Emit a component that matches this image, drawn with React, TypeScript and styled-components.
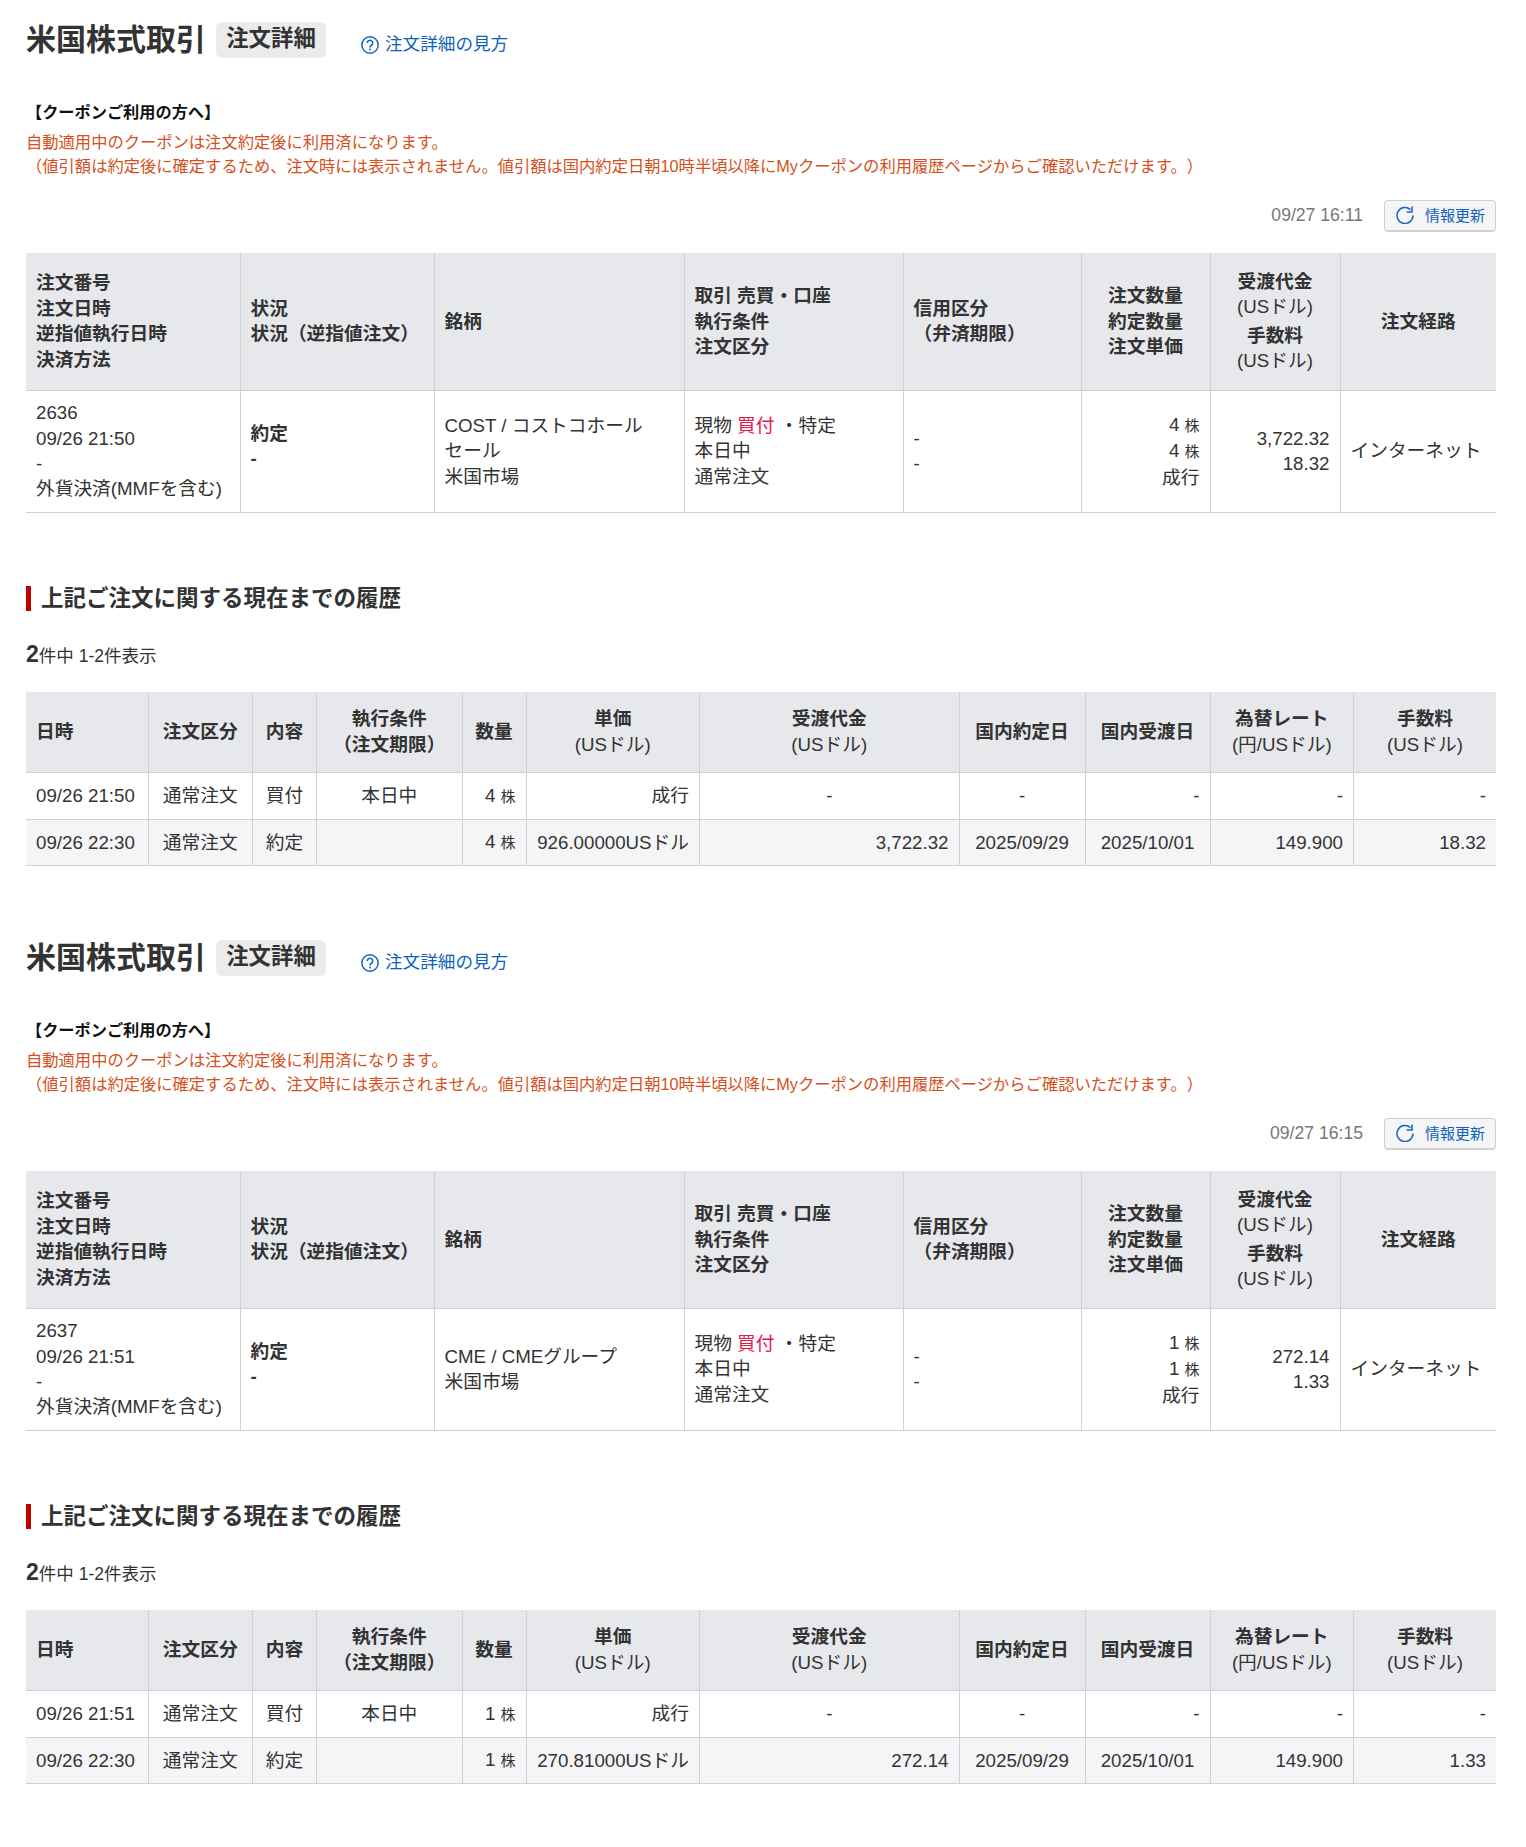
import * as React from 'react';
import styled, { createGlobalStyle } from 'styled-components';

const GlobalStyle = createGlobalStyle`
  html, body {
    margin: 0;
    padding: 0;
    background: #fff;
    color: #333;
    font-family: "Liberation Sans", "Noto Sans CJK JP", sans-serif;
    font-size: 18.72px;
    line-height: 25.4px;
  }
`;

type Align = 'left' | 'center' | 'right';

interface Order {
  number: string;
  ordered: string;
  name: string[];
  qty: string;
  amount: string;
  fee: string;
  now: string;
  fillTime: string;
  price: string;
  amountHistory: string;
  feeHistory: string;
}

const orders: Order[] = [
  {
    number: '2636',
    ordered: '09/26 21:50',
    name: ['COST / コストコホール', 'セール', '米国市場'],
    qty: '4',
    amount: '3,722.32',
    fee: '18.32',
    now: '09/27 16:11',
    fillTime: '09/26 22:30',
    price: '926.00000USドル',
    amountHistory: '3,722.32',
    feeHistory: '18.32',
  },
  {
    number: '2637',
    ordered: '09/26 21:51',
    name: ['CME / CMEグループ', '米国市場'],
    qty: '1',
    amount: '272.14',
    fee: '1.33',
    now: '09/27 16:15',
    fillTime: '09/26 22:30',
    price: '270.81000USドル',
    amountHistory: '272.14',
    feeHistory: '1.33',
  },
];

const detailCols = [214, 194, 250, 219, 178, 129, 130, 156];
const historyCols = [122, 104.5, 64, 145.5, 64, 173.5, 259.5, 126, 125, 143.5, 142.5];

const HelpIcon = () => (
  <svg width="18" height="18" viewBox="0 0 18 18" fill="none" stroke="#1565c0">
    <circle cx="9" cy="9" r="8.2" strokeWidth="1.5" />
    <path d="M6.3 7a2.7 2.7 0 1 1 4.1 2.3c-1 .6-1.4 1.1-1.4 2.2" strokeWidth="1.6" />
    <circle cx="9" cy="13.6" r="1" fill="#1565c0" stroke="none" />
  </svg>
);

const RefreshIcon = () => (
  <svg width="18" height="18" viewBox="0 0 18 18" fill="none" stroke="#1565c0">
    <path d="M17 9.6A8 8 0 1 1 14.4 3.6" strokeWidth="1.5" />
    <path d="M16 .6v5.4h-5.4" strokeWidth="1.6" />
  </svg>
);

const OrderSection: React.FC<{ order: Order }> = ({ order }) => (
  <Section>
    <TitleRow>
      <Title>米国株式取引</Title>
      <Badge>注文詳細</Badge>
      <HelpLink>
        <HelpIcon />
        注文詳細の見方
      </HelpLink>
    </TitleRow>

    <CouponHead>【クーポンご利用の方へ】</CouponHead>
    <Notice>
      自動適用中のクーポンは注文約定後に利用済になります。
      <br />
      （値引額は約定後に確定するため、注文時には表示されません。値引額は国内約定日朝10時半頃以降にMyクーポンの利用履歴ページからご確認いただけます。）
    </Notice>

    <UpdateRow>
      <Stamp>{order.now}</Stamp>
      <RefreshButton>
        <RefreshIcon />
        情報更新
      </RefreshButton>
    </UpdateRow>

    <Table>
      <colgroup>
        {detailCols.map((w, i) => (
          <Col key={i} $w={w} />
        ))}
      </colgroup>
      <thead>
        <tr>
          <Th $h={137}>
            注文番号
            <br />
            注文日時
            <br />
            逆指値執行日時
            <br />
            決済方法
          </Th>
          <Th>
            状況
            <br />
            状況（逆指値注文）
          </Th>
          <Th>銘柄</Th>
          <Th>
            取引 売買・口座
            <br />
            執行条件
            <br />
            注文区分
          </Th>
          <Th>
            信用区分
            <br />
            （弁済期限）
          </Th>
          <Th $align="center">
            注文数量
            <br />
            約定数量
            <br />
            注文単価
          </Th>
          <Th $align="center">
            受渡代金
            <Unit>(USドル)</Unit>
            <FeeHead>手数料</FeeHead>
            <Unit>(USドル)</Unit>
          </Th>
          <Th $align="center">注文経路</Th>
        </tr>
      </thead>
      <tbody>
        <tr>
          <Td $h={122}>
            {order.number}
            <br />
            {order.ordered}
            <br />
            -
            <br />
            外貨決済(MMFを含む)
          </Td>
          <Td>
            <Strong>
              約定
              <br />-
            </Strong>
          </Td>
          <Td>
            {order.name.map((line) => (
              <div key={line}>{line}</div>
            ))}
          </Td>
          <Td>
            現物 <Buy>買付</Buy> ・特定
            <br />
            本日中
            <br />
            通常注文
          </Td>
          <Td>
            -
            <br />-
          </Td>
          <Td $align="right">
            {order.qty} <Small>株</Small>
            <br />
            {order.qty} <Small>株</Small>
            <br />
            成行
          </Td>
          <Td $align="right">
            {order.amount}
            <br />
            {order.fee}
          </Td>
          <Td>インターネット</Td>
        </tr>
      </tbody>
    </Table>

    <HistoryHead>上記ご注文に関する現在までの履歴</HistoryHead>
    <Count>
      <CountNum>2</CountNum>件中 1-2件表示
    </Count>

    <HistoryTable>
      <colgroup>
        {historyCols.map((w, i) => (
          <Col key={i} $w={w} />
        ))}
      </colgroup>
      <thead>
        <tr>
          <Th $h={81}>日時</Th>
          <Th $align="center">注文区分</Th>
          <Th $align="center">内容</Th>
          <Th $align="center">
            執行条件
            <br />
            （注文期限）
          </Th>
          <Th $align="center">数量</Th>
          <Th $align="center">
            単価
            <Unit>(USドル)</Unit>
          </Th>
          <Th $align="center">
            受渡代金
            <Unit>(USドル)</Unit>
          </Th>
          <Th $align="center">国内約定日</Th>
          <Th $align="center">国内受渡日</Th>
          <Th $align="center">
            為替レート
            <Unit>(円/USドル)</Unit>
          </Th>
          <Th $align="center">
            手数料
            <Unit>(USドル)</Unit>
          </Th>
        </tr>
      </thead>
      <tbody>
        <tr>
          <Td $h={47}>{order.ordered}</Td>
          <Td $align="center">通常注文</Td>
          <Td $align="center">買付</Td>
          <Td $align="center">本日中</Td>
          <Td $align="right">
            {order.qty} <Small>株</Small>
          </Td>
          <Td $align="right">成行</Td>
          <Td $align="center">-</Td>
          <Td $align="center">-</Td>
          <Td $align="right">-</Td>
          <Td $align="right">-</Td>
          <Td $align="right">-</Td>
        </tr>
        <AltRow>
          <Td $h={46}>{order.fillTime}</Td>
          <Td $align="center">通常注文</Td>
          <Td $align="center">約定</Td>
          <Td $align="center" />
          <Td $align="right">
            {order.qty} <Small>株</Small>
          </Td>
          <Td $align="right">{order.price}</Td>
          <Td $align="right">{order.amountHistory}</Td>
          <Td $align="center">2025/09/29</Td>
          <Td $align="center">2025/10/01</Td>
          <Td $align="right">149.900</Td>
          <Td $align="right">{order.feeHistory}</Td>
        </AltRow>
      </tbody>
    </HistoryTable>
  </Section>
);

const App: React.FC = () => (
  <>
    <GlobalStyle />
    <Page>
      {orders.map((o) => (
        <OrderSection key={o.number} order={o} />
      ))}
    </Page>
  </>
);

const Page = styled.div`
  width: 1470px;
  padding: 22px 30px 35px 26px;
  display: flex;
  flex-direction: column;
  gap: 74px;
`;

const Section = styled.section`
  display: block;
`;

const TitleRow = styled.div`
  display: flex;
  align-items: center;
  height: 36px;
`;

const Title = styled.h1`
  margin: 0;
  font-size: 30px;
  line-height: 36px;
  font-weight: bold;
  color: #333;
`;

const Badge = styled.span`
  margin-left: 10px;
  width: 110px;
  height: 36px;
  border-radius: 6px;
  background: #ebebeb;
  font-size: 22.4px;
  font-weight: bold;
  line-height: 33px;
  text-align: center;
`;

const HelpLink = styled.a`
  margin-left: 35px;
  padding-top: 10px;
  display: flex;
  align-items: center;
  gap: 6px;
  font-size: 17.6px;
  color: #0f62b8;
`;

const CouponHead = styled.div`
  margin-top: 42px;
  font-size: 16.2px;
  line-height: 24px;
  font-weight: bold;
  color: #111;
`;

const Notice = styled.p`
  margin: 6px 0 0;
  font-size: 16.3px;
  line-height: 24px;
  color: #d4501c;
  text-spacing-trim: space-all;
`;

const UpdateRow = styled.div`
  margin-top: 22px;
  display: flex;
  justify-content: flex-end;
  align-items: center;
  gap: 21px;
`;

const Stamp = styled.span`
  font-size: 17.6px;
  color: #777;
`;

const RefreshButton = styled.button`
  width: 112px;
  height: 32px;
  padding: 0 10px 2px 11px;
  display: flex;
  align-items: center;
  justify-content: space-between;
  box-sizing: border-box;
  border: 1px solid #d0d1d4;
  border-bottom-width: 2px;
  border-radius: 4px;
  background: #f5f5f7;
  font-family: inherit;
  font-size: 15px;
  color: #0f62b8;
`;

const Table = styled.table`
  width: 1470px;
  margin-top: 21px;
  table-layout: fixed;
  border-collapse: collapse;
`;

const HistoryTable = styled(Table)`
  margin-top: 23px;
`;

const Col = styled.col<{ $w: number }>`
  width: ${(p) => p.$w}px;
`;

const Th = styled.th<{ $align?: Align; $h?: number }>`
  ${(p) => p.$h && `height: ${p.$h}px;`}
  padding: 0 10px;
  box-sizing: border-box;
  background: #e7e8ec;
  border-left: 1px solid #d0d1d4;
  border-bottom: 1px solid #cfd0d2;
  font-weight: bold;
  text-align: ${(p) => p.$align ?? 'left'};
  vertical-align: middle;
  &:first-child {
    border-left: 0;
  }
`;

const Td = styled.td<{ $align?: Align; $h?: number }>`
  ${(p) => p.$h && `height: ${p.$h}px;`}
  padding: 0 10px;
  box-sizing: border-box;
  border-left: 1px solid #d0d1d4;
  border-bottom: 1px solid #cfd0d2;
  text-align: ${(p) => p.$align ?? 'left'};
  vertical-align: middle;
  &:first-child {
    border-left: 0;
  }
`;

const AltRow = styled.tr`
  background: #f5f5f7;
`;

const Unit = styled.div`
  font-weight: normal;
`;

const FeeHead = styled.div`
  margin-top: 3px;
`;

const Strong = styled.div`
  padding-bottom: 10px;
  font-weight: bold;
`;

const Buy = styled.span`
  color: #e6164f;
`;

const Small = styled.span`
  font-size: 15px;
`;

const HistoryHead = styled.h2`
  margin: 73px 0 0;
  padding-left: 10px;
  border-left: 5px solid #c00000;
  font-size: 22.5px;
  line-height: 25px;
  font-weight: bold;
  color: #333;
`;

const Count = styled.div`
  margin-top: 30px;
  font-size: 17.5px;
  line-height: 26px;
`;

const CountNum = styled.strong`
  font-size: 23px;
`;

export default App;
